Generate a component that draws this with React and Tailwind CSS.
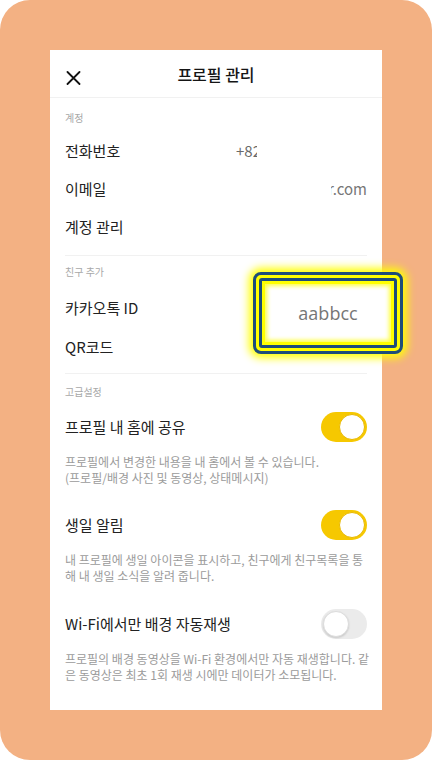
import React from "react";

const font = { fontFamily: '"Noto Sans CJK KR", "Noto Sans", sans-serif' };

function Toggle({ on }) {
  return on ? (
    <div className="w-[46px] h-[30px] rounded-full bg-[#f6c800] flex items-center justify-end pr-[2px]">
      <div className="w-[26px] h-[26px] rounded-full bg-white border border-[#e8b800]" />
    </div>
  ) : (
    <div className="w-[46px] h-[30px] rounded-full bg-[#ebebeb] flex items-center justify-start pl-[2px]">
      <div className="w-[26px] h-[26px] rounded-full bg-white border border-[#dcdcdc] shadow-[0_1px_2px_rgba(0,0,0,0.15)]" />
    </div>
  );
}

function Label({ children, className = "" }) {
  return (
    <div className={"text-[10px] leading-[14px] text-[#a8a8a8] " + className}>{children}</div>
  );
}

function Row({ children, right, h = "h-[38px]" }) {
  return (
    <div className={"flex items-center justify-between " + h}>
      <span className="text-[15px] text-[#222]">{children}</span>
      {right}
    </div>
  );
}

function Setting({ title, on, desc, className = "" }) {
  return (
    <div className={className}>
      <div className="flex items-center justify-between h-[36px]">
        <span className="text-[15px] text-[#222]">{title}</span>
        <Toggle on={on} />
      </div>
      <div className="mt-[9px] text-[12px] leading-[16px] text-[#9b9b9b]">
        {desc.map((l, i) => (
          <div key={i} className="whitespace-nowrap">{l}</div>
        ))}
      </div>
    </div>
  );
}

export default function App() {
  return (
    <div className="w-[432px] h-[760px] bg-white" style={font}>
      <div className="w-full h-full bg-[#f3b183] rounded-[30px] p-[50px]">
        <div className="relative w-[332px] h-[660px] bg-white flex flex-col">
          <div className="h-[48px] flex items-center justify-center relative border-b border-[#f1f1f1]">
            <svg
              className="absolute left-[16px] top-[21px]"
              width="15"
              height="14"
              viewBox="0 0 15 14"
            >
              <path d="M1.5 1 L13.5 13 M13.5 1 L1.5 13" stroke="#111" strokeWidth="1.8" strokeLinecap="round" />
            </svg>
            <span className="text-[16px] font-medium text-[#151515]">프로필 관리</span>
          </div>

          <div className="px-[15px]">
            <div className="pt-[13px] pb-[9px] border-b border-[#f1f1f1]">
              <Label className="mb-[7px]">계정</Label>
              <Row
                right={
                  <div className="w-[131px]">
                    <div className="w-[21px] overflow-hidden whitespace-nowrap text-[15px] text-[#6a6a6a]">+82</div>
                  </div>
                }
              >
                전화번호
              </Row>
              <Row
                right={
                  <div className="w-[36px] overflow-hidden flex justify-end whitespace-nowrap text-[15px] text-[#777]">
                    r.com
                  </div>
                }
              >
                이메일
              </Row>
              <Row>계정 관리</Row>
            </div>

            <div className="pt-[9px] pb-[6px] border-b border-[#f1f1f1]">
              <Label className="mb-[10px]">친구 추가</Label>
              <Row h="h-[39px]">카카오톡 ID</Row>
              <Row h="h-[39px]">QR코드</Row>
            </div>

            <div className="pt-[11px]">
              <Label className="mb-[10px]">고급설정</Label>
              <Setting
                title="프로필 내 홈에 공유"
                on
                desc={[
                  "프로필에서 변경한 내용을 내 홈에서 볼 수 있습니다.",
                  "(프로필/배경 사진 및 동영상, 상태메시지)",
                ]}
              />
              <Setting
                className="mt-[21px]"
                title="생일 알림"
                on
                desc={[
                  "내 프로필에 생일 아이콘을 표시하고, 친구에게 친구목록을 통",
                  "해 내 생일 소식을 알려 줍니다.",
                ]}
              />
              <Setting
                className="mt-[22px]"
                title="Wi-Fi에서만 배경 자동재생"
                on={false}
                desc={[
                  "프로필의 배경 동영상을 Wi-Fi 환경에서만 자동 재생합니다. 같",
                  "은 동영상은 최초 1회 재생 시에만 데이터가 소모됩니다.",
                ]}
              />
            </div>
          </div>

          <div className="absolute left-[203px] top-[222px] w-[150px] h-[82px] rounded-[8px] border-[3px] border-[#1d4d7a] bg-[#ffff00] p-[3px] shadow-[0_0_8px_4px_#ffff00]">
            <div className="w-full h-full rounded-[3px] border-[3px] border-[#1d4d7a] bg-[#ffff00] p-[3px]">
              <div className="w-full h-full bg-white shadow-[inset_0_0_4px_2px_#ffff40] flex items-center justify-center">
                <span className="text-[18px] text-[#767676]" style={{ fontFamily: '"Open Sans", "Noto Sans", sans-serif' }}>aabbcc</span>
              </div>
            </div>
          </div>
        </div>
      </div>
    </div>
  );
}
